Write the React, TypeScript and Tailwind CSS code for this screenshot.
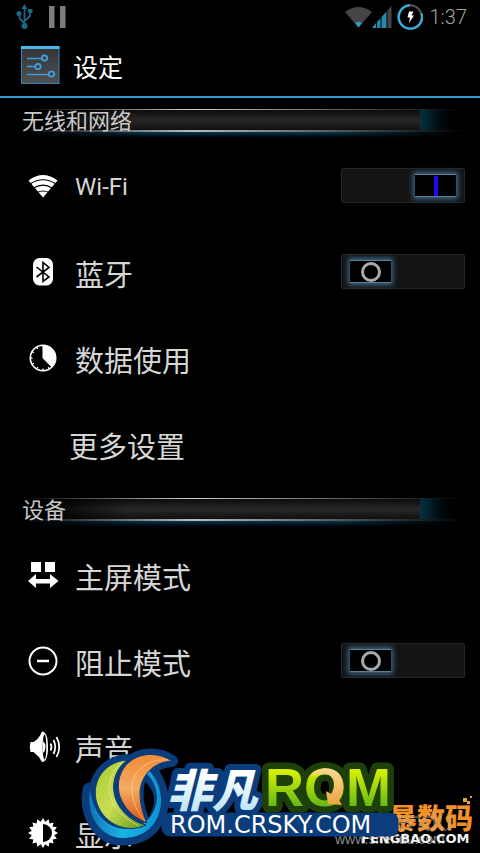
import { useState, type ReactNode } from "react"

type Item = {
  id: string
  label: string
  icon?: ReactNode
  toggle?: boolean
  on?: boolean
}

type Section = {
  title: string
  items: Item[]
}

const teeth = Array.from({ length: 32 }, (_, i) => {
  const r = i % 2 === 0 ? 15 : 11.5
  const a = (i * Math.PI) / 16
  return `${16 + r * Math.cos(a)},${16 + r * Math.sin(a)}`
}).join(" ")

const ticks = Array.from({ length: 12 }, (_, i) => i * 30)

const sections: Section[] = [
  {
    title: "无线和网络",
    items: [
      { id: "wifi", label: "Wi-Fi", icon: <WifiIcon />, toggle: true, on: true },
      { id: "bluetooth", label: "蓝牙", icon: <BluetoothIcon />, toggle: true },
      { id: "data", label: "数据使用", icon: <DataIcon /> },
      { id: "more", label: "更多设置" },
    ],
  },
  {
    title: "设备",
    items: [
      { id: "home", label: "主屏模式", icon: <HomeModeIcon /> },
      { id: "block", label: "阻止模式", icon: <BlockIcon />, toggle: true },
      { id: "sound", label: "声音", icon: <SoundIcon /> },
      { id: "display", label: "显示", icon: <DisplayIcon /> },
    ],
  },
]

export default function App() {
  return (
    <div className="relative flex h-screen flex-col overflow-hidden bg-black font-['Roboto','Noto_Sans_CJK_SC',sans-serif] text-[#d6d6d6]">
      <StatusBar />
      <header className="flex h-[62px] shrink-0 items-center gap-3 px-5">
        <SettingsIcon />
        <h1 className="pt-2 text-[25px] leading-8 text-white">设定</h1>
      </header>
      <div className="h-0.5 shrink-0 bg-[#2b9fca]" />
      <main className="min-h-0 flex-1 overflow-hidden">
        {sections.map((s) => (
          <section key={s.title}>
            <SectionTitle>{s.title}</SectionTitle>
            <ul>
              {s.items.map((item) => (
                <Row key={item.id} item={item} />
              ))}
            </ul>
          </section>
        ))}
      </main>
      <Watermark />
    </div>
  )
}

function StatusBar() {
  return (
    <div className="flex h-[34px] shrink-0 items-center justify-between pr-[13px] pl-4">
      <div className="flex items-center gap-4">
        <svg width="17" height="26" viewBox="0 0 17 26" fill="none" stroke="#176b87" strokeWidth="1.7">
          <path d="M8.5 22V4M8.5 19L3.5 14.500V10M8.500 17L14 12V7" />
          <path d="M8.500 0L11.500 5H5.500Z" fill="#176b87" stroke="none" />
          <circle cx="8.500" cy="22" r="3" fill="#176b87" stroke="none" />
          <circle cx="3" cy="9.500" r="2.500" fill="#176b87" stroke="none" />
          <path d="M12 5h4.500v4H12z" fill="#176b87" stroke="none" />
        </svg>
        <svg width="17" height="22" viewBox="0 0 17 22" fill="#7d7d7d">
          <path d="M0 0h5.500v22H0zM11 0h5.500v22H11z" />
        </svg>
      </div>
      <div className="flex items-center">
        <svg width="27" height="22" viewBox="0 0 27 22">
          <path d="M0 6Q13.500 -4 27 6L13.500 21.500Z" fill="#454545" />
          <path d="M10 17Q13.500 14.500 17 17L13.500 21.500Z" fill="#2f9cc6" />
        </svg>
        <svg width="20" height="22" viewBox="0 0 20 22">
          <path d="M15.500 4.500L19.500 0V22H15.500Z" fill="#454545" />
          <path d="M0.500 22V21L4 17V22ZM5 22V16L8.500 12.200V22ZM9.500 22V11L14.500 5.500V22Z" fill="#2687ad" />
        </svg>
        <svg width="26" height="26" viewBox="0 0 26 26" className="ml-[5px]">
          <circle cx="13" cy="13" r="11.700" fill="none" stroke="#555" strokeWidth="2" />
          <path d="M24.600 9.500A11.700 11.700 0 1 1 13 1.300" fill="none" stroke="#31b1dd" strokeWidth="2.200" />
          <path d="M12 7.500H16.500L14.500 11.500H17L12 19L13 13.500H10.500Z" fill="#fff" />
        </svg>
        <span className="ml-[7px] text-xl leading-6 font-light text-[#a4a4a4]">1:37</span>
      </div>
    </div>
  )
}

function SectionTitle({ children }: { children: ReactNode }) {
  return (
    <div className="relative h-[45px] pt-[11px]">
      <div className="h-px bg-linear-to-r from-transparent from-5% via-[#c9d2d4] via-40% to-transparent to-97%" />
      <div className="flex h-5">
        <div className="w-7/8">
          <div className="h-full bg-linear-to-b from-[#0c0c0c] via-[#282828] to-[#101010] mask-l-from-70% mask-l-to-90%" />
        </div>
        <div className="w-1/12 bg-linear-to-r from-[#04303f] to-black" />
      </div>
      <div className="h-0.5 bg-linear-to-r from-transparent from-5% via-[#b9bcbd] via-40% to-transparent to-97%" />
      <div className="h-2 bg-linear-to-b from-[#04384f] to-black mask-r-from-70% mask-r-to-95% mask-l-from-70% mask-l-to-95%" />
      <h2 className="absolute top-2 left-[22px] text-[22px] leading-8 text-[#c8c8c8]">{children}</h2>
    </div>
  )
}

function Row({ item }: { item: Item }) {
  const [on, setOn] = useState(item.on ?? false)
  const inner = (
    <>
      {item.icon && <span className="w-8 shrink-0">{item.icon}</span>}
      <span className={item.label === "Wi-Fi" ? "flex-1 pt-0.5 text-2xl" : "flex-1 pt-2 text-[29px] leading-10"}>
        {item.label}
      </span>
    </>
  )

  if (item.toggle) {
    return (
      <li>
        <label className="flex h-[86px] items-center gap-4 pr-[15px] pl-[27px]">
          {inner}
          <Switch on={on} onChange={setOn} />
        </label>
      </li>
    )
  }

  return (
    <li>
      <a
        href={`#${item.id}`}
        className={
          item.icon
            ? "flex h-[86px] items-center gap-4 pr-[15px] pl-[27px]"
            : "flex h-[86px] items-center pr-[15px] pl-[69px]"
        }
      >
        {inner}
      </a>
    </li>
  )
}

function Switch({ on, onChange }: { on: boolean; onChange: (v: boolean) => void }) {
  return (
    <span className="relative block h-9 w-[124px]">
      <input
        type="checkbox"
        role="switch"
        checked={on}
        onChange={(e) => onChange(e.target.checked)}
        className="absolute inset-0 h-full w-full opacity-0"
      />
      <span
        className={
          on
            ? "flex h-[35px] items-center justify-end rounded-xs border border-[#262626] bg-[#141414] px-2"
            : "flex h-[35px] items-center justify-start rounded-xs border border-[#262626] bg-[#141414] px-2"
        }
      >
        <span className="flex h-[23px] w-[41px] items-center justify-center border-y border-[#5d7f98] bg-black shadow-[0_0_5px_2px_#3c6787]">
          {on ? (
            <span className="h-5 w-1 bg-[#2008f0]" />
          ) : (
            <span className="size-5 rounded-full border-3 border-[#a5abb0]" />
          )}
        </span>
      </span>
    </span>
  )
}

function SettingsIcon() {
  return (
    <svg width="41" height="40" viewBox="0 0 41 40">
      <defs>
        <linearGradient id="tile" x1="0" y1="0" x2="0" y2="1">
          <stop offset="0" stopColor="#343434" />
          <stop offset="1" stopColor="#505050" />
        </linearGradient>
      </defs>
      <rect x="1.500" y="1.500" width="37.500" height="37" fill="url(#tile)" stroke="#3285bd" />
      <path d="M1 1h38.500v3H1z" fill="#47b9ec" />
      <path d="M7 13.500H33M7 21.500H33M7 29.500H33" stroke="#27506e" strokeWidth="1" />
      <path d="M7 13.500H22M7 21.500H15M7 29.500H29" stroke="#3c9ce0" strokeWidth="1.300" />
      <g fill="#444" stroke="#3f9fe4" strokeWidth="1.700">
        <circle cx="24.500" cy="13" r="2.700" />
        <circle cx="18" cy="21.500" r="2.700" />
        <circle cx="31.500" cy="29" r="2.700" />
      </g>
    </svg>
  )
}

function WifiIcon() {
  return (
    <svg width="32" height="32" viewBox="0 0 32 32">
      <path d="M1.500 10.500Q16 -0.500 30.500 10.500L16 27.500Z" fill="#fff" />
      <g fill="none" stroke="#000" strokeWidth="1.100">
        <path d="M3 14Q16 5.500 29 14" />
        <path d="M7 17.800Q16 12.500 25 17.800" />
        <path d="M10 22.500Q16 19.500 22 22.500" />
      </g>
    </svg>
  )
}

function BluetoothIcon() {
  return (
    <svg width="32" height="32" viewBox="0 0 32 32">
      <rect x="6" y="2" width="20" height="27.500" rx="6.500" fill="#fff" />
      <path d="M9.500 11L22 21L16 25.500V6.500L22 11.500L9.500 21" fill="none" stroke="#000" strokeWidth="1.600" />
    </svg>
  )
}

function DataIcon() {
  return (
    <svg width="32" height="32" viewBox="0 0 32 32">
      <circle cx="16" cy="16" r="12.700" fill="none" stroke="#fff" strokeWidth="1.600" />
      <path d="M15.500 16V3A13 13 0 0 1 24.800 25.600Z" fill="#fff" />
      {ticks.map((deg) => (
        <path key={deg} d="M16 3V5.500" stroke="#fff" strokeWidth="1.300" transform={`rotate(${deg} 16 16)`} />
      ))}
    </svg>
  )
}

function HomeModeIcon() {
  return (
    <svg width="32" height="32" viewBox="0 0 32 32" fill="#fff">
      <path d="M4 3h10v10H4zM18 3h10v10H18z" />
      <path d="M1 22L9 15V20H23V15L31.500 22L23 29V24.500H9V29Z" />
    </svg>
  )
}

function BlockIcon() {
  return (
    <svg width="32" height="32" viewBox="0 0 32 32" fill="none" stroke="#fff">
      <circle cx="16" cy="16" r="13.500" strokeWidth="2" />
      <path d="M10 16H22" strokeWidth="2.500" />
    </svg>
  )
}

function SoundIcon() {
  return (
    <svg width="34" height="32" viewBox="0 0 34 32">
      <path d="M3.500 11H6.500Q12 8 15 0.500Q21 1 21 16T15 31Q12 25 6.500 21H3.500Q2 16 3.500 11Z" fill="#fff" />
      <ellipse cx="17.500" cy="16" rx="1.800" ry="12.500" fill="#000" />
      <path d="M16 10Q18.500 12 18.500 16T16 22Z" fill="#fff" />
      <g fill="none" stroke="#fff" strokeWidth="1.700">
        <path d="M23.500 12.500Q25.500 16 23.500 19.500" />
        <path d="M26.500 9Q30 16 26.500 23" />
        <path d="M29.500 6Q35 16 29.500 26" />
      </g>
    </svg>
  )
}

function DisplayIcon() {
  return (
    <svg width="32" height="32" viewBox="0 0 32 32">
      <polygon points={teeth} fill="#fff" />
      <path d="M16 7A9 9 0 0 1 16 25Z" fill="#000" />
    </svg>
  )
}

const cyanRing =
  "M90 790C86 812 98 838 123 838C148 838 162 820 161 798C160 784 153 773 145 767L144 771C152 778 157 787 157 798C156 816 142 829 127 829C106 829 93 812 90 790Z"
const greenMoon = "M127 760C104 762 92 781 96 800C101 822 125 835 146 825C127 820 116 806 114 792C112 779 118 767 127 760Z"
const orangeMoon = "M172 761C160 753 144 752 132 760C118 769 115 788 122 801C127 812 137 819 147 823C142 811 140 803 140 792C141 776 153 762 172 761Z"

function Watermark() {
  return (
    <svg
      width="400"
      height="113"
      viewBox="80 740 400 113"
      className="pointer-events-none absolute right-0 bottom-0"
    >
      <defs>
        <linearGradient id="ice" x1="0" y1="0" x2="0" y2="1">
          <stop offset="0.300" stopColor="#fff" />
          <stop offset="1" stopColor="#a9dcf5" />
        </linearGradient>
        <linearGradient id="lime" x1="0" y1="0" x2="0" y2="1">
          <stop offset="0.250" stopColor="#d3ee00" />
          <stop offset="0.850" stopColor="#5fb51c" />
        </linearGradient>
        <linearGradient id="leaf" x1="0" y1="0" x2="1" y2="1">
          <stop offset="0" stopColor="#a8cb2c" />
          <stop offset="0.500" stopColor="#c9dd55" />
          <stop offset="1" stopColor="#5d9a12" />
        </linearGradient>
        <linearGradient id="flame" x1="0" y1="0" x2="0" y2="1">
          <stop offset="0" stopColor="#f08a35" />
          <stop offset="0.500" stopColor="#f6ab62" />
          <stop offset="1" stopColor="#d9560c" />
        </linearGradient>
        <linearGradient id="sea" x1="0" y1="0" x2="1" y2="0">
          <stop offset="0" stopColor="#1273b8" />
          <stop offset="0.450" stopColor="#19b4e2" />
          <stop offset="1" stopColor="#0f93d3" />
        </linearGradient>
        <linearGradient id="amber" x1="0" y1="0" x2="0" y2="1">
          <stop offset="0" stopColor="#fbd898" />
          <stop offset="1" stopColor="#eda33c" />
        </linearGradient>
      </defs>

      <text x="389" y="829" fontSize="28" fontWeight="900" fill="#f0912a" fontFamily="Noto Sans CJK SC, sans-serif">
        暴数码
      </text>
      <path d="M463 798h4v4h-4zM470 796h2v2h-2zM467 801h3v3h-3z" fill="#e9a23a" />
      <text x="364" y="831" fontSize="27" fill="#b9b9b9" opacity="0.400" fontFamily="Liberation Sans, sans-serif">
        shendu
      </text>
      <text x="335" y="844" fontSize="14" fill="#8a8a8a" fontFamily="Liberation Sans, sans-serif">
        www.shendu.com
      </text>
      <text x="361" y="843" fontSize="13" fontWeight="700" fill="#f1f1f1" fontFamily="DejaVu Sans, sans-serif">
        FENGBAO.COM
      </text>

      <g fill="#0b3c7c" stroke="#0b3c7c" strokeLinejoin="round">
        <path d={cyanRing} strokeWidth="15" />
        <path d={greenMoon} strokeWidth="12" />
        <path d={orangeMoon} strokeWidth="12" />
        <rect x="166" y="817" width="228" height="15" rx="4" strokeWidth="9" />
      </g>
      <path d="M145 782C153 788 157 800 152 810L149 818C144 806 142 796 145 782Z" fill="#000" />
      <path d={cyanRing} fill="url(#sea)" />
      <path d={greenMoon} fill="url(#leaf)" stroke="#0b3c7c" />
      <path d="M121 763C103 779 103 808 139 826" fill="none" stroke="#e6f0a0" opacity="0.600" />
      <path d={orangeMoon} fill="url(#flame)" stroke="#0b3c7c" />
      <path d="M168 760C148 758 132 771 132 789C132 802 138 813 145 821" fill="none" stroke="#fbdcb5" opacity="0.600" />

      <text
        x="167"
        y="807"
        fontSize="45"
        fontWeight="900"
        fontStyle="italic"
        fill="url(#ice)"
        stroke="#0b3c7c"
        strokeWidth="12"
        strokeLinejoin="round"
        paintOrder="stroke"
        fontFamily="Noto Sans CJK SC, sans-serif"
      >
        非凡
      </text>
      <text
        x="265"
        y="806"
        fontSize="54"
        fontWeight="700"
        fill="url(#lime)"
        stroke="#1d4008"
        strokeWidth="13"
        strokeLinejoin="round"
        paintOrder="stroke"
        fontFamily="Liberation Sans, sans-serif"
      >
        ROM
      </text>
      <path d="M311 776C318 765 336 766 341 777C345 786 343 795 339 800L342 805L328 804L326 791L331 794C336 787 335 775 325 774C319 773 314 776 311 776Z" fill="url(#amber)" />
      <rect x="164" y="815" width="234" height="21" rx="5" fill="#0b3c7c" />
      <text x="170" y="833" fontSize="24" fill="#fff" fontFamily="DejaVu Sans, sans-serif">
        ROM.CRSKY.COM
      </text>
    </svg>
  )
}
